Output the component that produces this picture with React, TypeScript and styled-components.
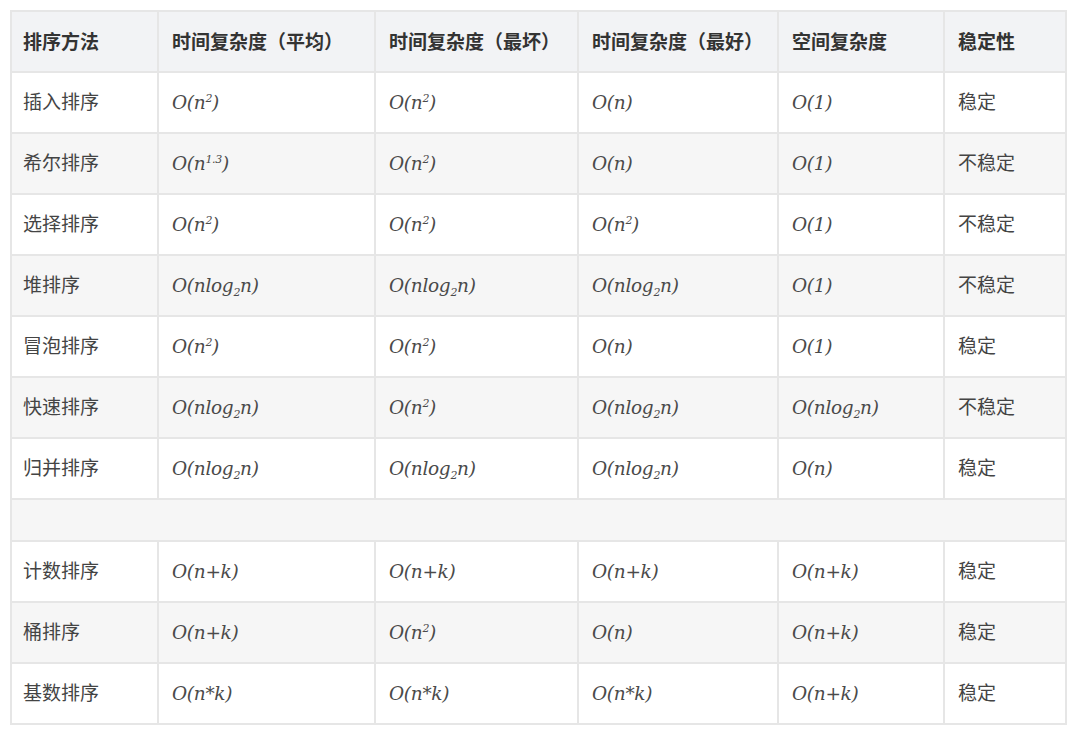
import React from "react";
import styled, { createGlobalStyle } from "styled-components";

const Global = createGlobalStyle`
  html, body { margin: 0; padding: 0; background: #ffffff; }
  body { font-family: "Noto Sans CJK SC", "Noto Sans", sans-serif; }
`;

const Page = styled.div`
  padding: 10px 13px 0 10px;
  width: 1080px;
  box-sizing: border-box;
`;

const Table = styled.table`
  border-collapse: collapse;
  width: 1057px;
  table-layout: fixed;
  border: 2px solid #e6e6e6;
`;

const HeadCell = styled.th<{ $w: number; $first?: boolean }>`
  width: ${(p) => p.$w}px;
  height: 61px;
  box-sizing: border-box;
  padding: 0 8px 3px ${(p) => (p.$first ? 11 : 13)}px;
  text-align: left;
  font-weight: 700;
  font-size: 19px;
  color: #333333;
  background: #f2f3f5;
  border: 2px solid #e6e6e6;
  white-space: nowrap;
`;

const Row = styled.tr<{ $alt: boolean }>`
  background: ${(p) => (p.$alt ? "#f6f6f6" : "#ffffff")};
`;

const Cell = styled.td<{ $first?: boolean }>`
  height: 61px;
  box-sizing: border-box;
  padding: 0 8px 4px ${(p) => (p.$first ? 11 : 13)}px;
  border: 2px solid #e6e6e6;
  font-size: 19px;
  color: #444444;
  white-space: nowrap;
`;

const SpacerCell = styled.td`
  height: 42px;
  box-sizing: border-box;
  border: 2px solid #e6e6e6;
`;

const Math = styled.span`
  font-family: "DejaVu Serif", "Liberation Serif", serif;
  font-style: italic;
  font-size: 18.5px;
  color: #4a4a4a;
  letter-spacing: -0.3px;
`;

const Sup = styled.sup`
  font-size: 11px;
  vertical-align: 7px;
  line-height: 0;
`;

const Sub = styled.sub`
  font-size: 11px;
  vertical-align: -4px;
  line-height: 0;
`;

type Expr = "n2" | "n13" | "n" | "1" | "nlogn" | "nk" | "n*k";

const Expression: React.FC<{ e: Expr }> = ({ e }) => {
  switch (e) {
    case "n2":
      return (
        <Math>
          O(n<Sup>2</Sup>)
        </Math>
      );
    case "n13":
      return (
        <Math>
          O(n<Sup>1.3</Sup>)
        </Math>
      );
    case "n":
      return <Math>O(n)</Math>;
    case "1":
      return <Math>O(1)</Math>;
    case "nlogn":
      return (
        <Math>
          O(nlog<Sub>2</Sub>n)
        </Math>
      );
    case "nk":
      return <Math>O(n+k)</Math>;
    case "n*k":
      return <Math>O(n*k)</Math>;
  }
};

const headers: [string, number][] = [
  ["排序方法", 147],
  ["时间复杂度（平均）", 217],
  ["时间复杂度（最坏）", 203],
  ["时间复杂度（最好）", 200],
  ["空间复杂度", 166],
  ["稳定性", 122],
];

type RowData = [string, Expr, Expr, Expr, Expr, string] | null;

const rows: RowData[] = [
  ["插入排序", "n2", "n2", "n", "1", "稳定"],
  ["希尔排序", "n13", "n2", "n", "1", "不稳定"],
  ["选择排序", "n2", "n2", "n2", "1", "不稳定"],
  ["堆排序", "nlogn", "nlogn", "nlogn", "1", "不稳定"],
  ["冒泡排序", "n2", "n2", "n", "1", "稳定"],
  ["快速排序", "nlogn", "n2", "nlogn", "nlogn", "不稳定"],
  ["归并排序", "nlogn", "nlogn", "nlogn", "n", "稳定"],
  null,
  ["计数排序", "nk", "nk", "nk", "nk", "稳定"],
  ["桶排序", "nk", "n2", "n", "nk", "稳定"],
  ["基数排序", "n*k", "n*k", "n*k", "nk", "稳定"],
];

export default function App() {
  return (
    <>
      <Global />
      <Page>
        <Table>
          <thead>
            <tr>
              {headers.map(([h, w], i) => (
                <HeadCell key={h} $w={w} $first={i === 0}>
                  {h}
                </HeadCell>
              ))}
            </tr>
          </thead>
          <tbody>
            {rows.map((r, i) => (
              <Row key={i} $alt={i % 2 === 1}>
                {r === null ? (
                  <SpacerCell colSpan={6} />
                ) : (
                  <>
                    <Cell $first>{r[0]}</Cell>
                    <Cell>
                      <Expression e={r[1]} />
                    </Cell>
                    <Cell>
                      <Expression e={r[2]} />
                    </Cell>
                    <Cell>
                      <Expression e={r[3]} />
                    </Cell>
                    <Cell>
                      <Expression e={r[4]} />
                    </Cell>
                    <Cell>{r[5]}</Cell>
                  </>
                )}
              </Row>
            ))}
          </tbody>
        </Table>
      </Page>
    </>
  );
}
